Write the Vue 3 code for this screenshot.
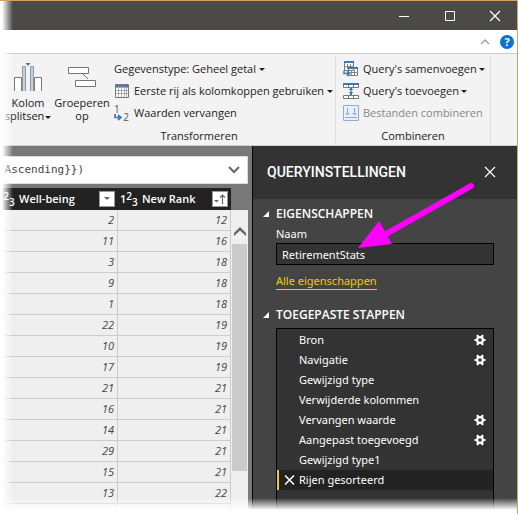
<script setup>
import { ref } from 'vue'

const rows = [
  [2, 12], [11, 16], [3, 18], [9, 18], [1, 18], [22, 19], [10, 19],
  [17, 19], [21, 21], [16, 21], [14, 21], [29, 21], [15, 21], [13, 22], ['', ''],
]
const steps = [
  { label: 'Bron', gear: true },
  { label: 'Navigatie', gear: true },
  { label: 'Gewijzigd type' },
  { label: 'Verwijderde kolommen' },
  { label: 'Vervangen waarde', gear: true },
  { label: 'Aangepast toegevoegd', gear: true },
  { label: 'Gewijzigd type1' },
  { label: 'Rijen gesorteerd' },
]
const selected = ref(7)
const queryName = ref('RetirementStats')
</script>

<template>
  <div class="window">
    <header class="titlebar">
      <button class="win-btn" aria-label="Minimaliseren">
        <svg width="12" height="12" viewBox="0 0 12 12"><path d="M1 6.5h10" stroke="#fff" /></svg>
      </button>
      <button class="win-btn" aria-label="Maximaliseren">
        <svg width="12" height="12" viewBox="0 0 12 12"><path d="M1.5 1.5h9v9h-9z" fill="none" stroke="#fff" /></svg>
      </button>
      <button class="win-btn" aria-label="Venster sluiten">
        <svg width="12" height="12" viewBox="0 0 12 12"><path d="M1 1l10 10M11 1L1 11" stroke="#fff" stroke-width="1.3" /></svg>
      </button>
    </header>

    <div class="tabs">
      <button class="plain" aria-label="Lint samenvouwen">
        <svg width="10" height="8" viewBox="0 0 10 8"><path d="M1 6l4-4 4 4" fill="none" stroke="#999" stroke-width="1.3" /></svg>
      </button>
      <button class="plain help" aria-label="Help">?</button>
    </div>

    <nav class="ribbon">
      <section class="group transform">
        <div class="group-body">
          <button class="big split">
            <svg width="30" height="30" viewBox="0 0 30 30">
              <path d="M1.500 29V15.500h7V29M21.500 29V15.500h7V29" fill="#fff" stroke="#777" />
              <path d="M9.500 29V4.500h3V29M17.500 29V4.500h3V29" fill="#bcd2ea" stroke="#999" />
              <path d="M12.500 1h5L15 4z" fill="#3a78b8" />
            </svg>
            <span>Kolom<br />splitsen<i class="caret"></i></span>
          </button>
          <button class="big">
            <svg width="30" height="30" viewBox="0 0 30 30">
              <path d="M15 11l6 6" stroke="#777" />
              <path d="M1.500 5.500h20v6h-20zM8.500 18.500h20v6h-20z" fill="#fff" stroke="#777" />
            </svg>
            <span>Groeperen<br />op</span>
          </button>
          <div class="stack">
            <button class="small">Gegevenstype: Geheel getal<i class="caret"></i></button>
            <button class="small">
              <svg class="ic-table" width="14" height="14" viewBox="0 0 14 14">
                <path d="M.5.5h13v13H.5z" fill="#fff" stroke="#777" />
                <path d="M1 1h12v2H1z" fill="#3a78b8" />
                <path d="M1 3.500h12M1 6.500h12M1 9.500h12M3.500 1v12M6.500 1v12M9.500 1v12M11.500 3v10" stroke="#999" stroke-width=".8" />
              </svg>
              Eerste rij als kolomkoppen gebruiken<i class="caret"></i>
            </button>
            <button class="small">
              <span class="ic-replace" aria-hidden="true">
                <b>1</b>
                <svg width="8" height="7" viewBox="0 0 8 7"><path d="M1 0v3.500h5M4 1l3 2.500L4 6" fill="none" stroke="#3a78b8" stroke-width="1.700" /></svg>
                <b>2</b>
              </span>
              Waarden vervangen
            </button>
          </div>
        </div>
        <h2>Transformeren</h2>
      </section>

      <section class="group combine">
        <div class="group-body">
          <div class="stack">
            <button class="small">
              <svg width="16" height="16" viewBox="0 0 16 16">
                <path d="M1.500 1.500h9v8h-9zM5.500 7.500h9v7h-9z" fill="#fff" stroke="#777" />
                <path d="M4.500 3v5M7.500 3v4M1 5.500h10M5 11.500h10M8.500 9v6M11.500 9v6" stroke="#888" />
                <path d="M1 0h10v2H1zM5 6h10v2H5z" fill="#3a78b8" />
                <path d="M0 10h5v6H0z" fill="#f3f3f3" />
                <path d="M1 9.500v3h5M4 10.500l2.500 2L4 15" fill="none" stroke="#3a78b8" stroke-width="1.500" />
              </svg>
              Query's samenvoegen<i class="caret"></i>
            </button>
            <button class="small">
              <svg width="16" height="16" viewBox="0 0 16 16">
                <path d="M.5 1.500h15v3H.5zM.5 12.500h15v3H.5zM5.500 2v2M10.500 2v2M5.500 13v2M10.500 13v2" fill="#fff" stroke="#777" />
                <path d="M0 0h16v2H0z" fill="#3a78b8" />
                <path d="M7 5h2v1h1.500L8 8 5.500 6H7zM8 8l2.500 2H9v2H7v-2H5.500z" fill="#3a78b8" />
              </svg>
              Query's toevoegen<i class="caret"></i>
            </button>
            <button class="small" disabled>
              <svg width="16" height="16" viewBox="0 0 16 16">
                <path d="M.5.5h15v15H.5z" fill="#e9f0f8" stroke="#8fadd0" />
                <path d="M4.500 3v7M2.500 8l2 2 2-2M11.500 3v7M9.500 8l2 2 2-2M2 12.500h12" fill="none" stroke="#8fa6c4" />
              </svg>
              Bestanden combineren
            </button>
          </div>
        </div>
        <h2>Combineren</h2>
      </section>
    </nav>

    <main class="work">
      <section class="data">
        <div class="formula">
          <code>.Ascending}})</code>
          <button class="plain" aria-label="Formulebalk uitvouwen">
            <svg width="12" height="8" viewBox="0 0 12 8"><path d="M1 1l5 5 5-5" fill="none" stroke="#666" stroke-width="2" /></svg>
          </button>
        </div>
        <div class="grid-wrap">
          <table>
            <thead>
              <tr>
                <th v-for="(name, i) in ['Well-being', 'New Rank']" :key="name">
                  <div class="th">
                    <span class="type">1<sup>2</sup><sub>3</sub></span>
                    <span class="name">{{ name }}</span>
                    <button class="filter" :aria-label="'Filter ' + name">
                      <svg v-if="i === 0" width="14" height="14" viewBox="0 0 14 14"><path d="M4 5h6L7 8z" fill="#666" /></svg>
                      <svg v-else width="14" height="14" viewBox="0 0 14 14">
                        <path d="M1 8h5L3.500 10.500z" fill="#666" />
                        <path d="M9.500 12V3M7 5.500L9.500 3 12 5.500" fill="none" stroke="#666" stroke-width="1.200" />
                      </svg>
                    </button>
                  </div>
                </th>
              </tr>
            </thead>
            <tbody>
              <tr v-for="(r, i) in rows" :key="i">
                <td>{{ r[0] }}</td>
                <td>{{ r[1] }}</td>
              </tr>
            </tbody>
          </table>
          <div class="scroll">
            <button class="plain scroll-up" aria-label="Omhoog schuiven">
              <svg width="12" height="9" viewBox="0 0 12 9"><path d="M0 8V6l6-6 6 6v3L6 3.500 0 9z" fill="#666" /></svg>
            </button>
            <div class="thumb"></div>
          </div>
        </div>
      </section>

      <aside class="settings">
        <div class="settings-head">
          <h1>QUERYINSTELLINGEN</h1>
          <button class="plain" aria-label="Paneel sluiten">
            <svg width="12" height="12" viewBox="0 0 12 12"><path d="M1 1l10 10M11 1L1 11" stroke="#fff" stroke-width="1.200" /></svg>
          </button>
        </div>
        <div class="settings-body">
          <h3><svg width="6" height="6" viewBox="0 0 6 6"><path d="M6 0v6H0z" fill="#fff" /></svg>EIGENSCHAPPEN</h3>
          <div class="props">
            <label for="qname">Naam</label>
            <input id="qname" v-model="queryName" type="text" />
            <a href="#">Alle eigenschappen</a>
          </div>
          <h3><svg width="6" height="6" viewBox="0 0 6 6"><path d="M6 0v6H0z" fill="#fff" /></svg>TOEGEPASTE STAPPEN</h3>
          <ul class="steps">
            <li v-for="(s, i) in steps" :key="s.label" :class="{ active: i === selected }" @click="selected = i">
              <button v-if="i === selected" class="plain remove" aria-label="Stap verwijderen">
                <svg width="11" height="10" viewBox="0 0 11 10"><path d="M1 .5L10 9.500M10 .5L1 9.500" stroke="#fff" stroke-width="1.500" /></svg>
              </button>
              <span>{{ s.label }}</span>
              <button v-if="s.gear" class="plain gear" :aria-label="'Instellingen ' + s.label">
                <svg width="12" height="12" viewBox="0 0 12 12">
                  <circle cx="6" cy="6" r="2.900" fill="none" stroke="#fff" stroke-width="2.200" />
                  <path d="M.5 6h2M9.500 6h2M3.200 1l1 2M8.800 1l-1 2M3.200 11l1-2M8.800 11l-1-2" stroke="#fff" stroke-width="2.200" />
                </svg>
              </button>
            </li>
          </ul>
        </div>
        <svg class="pointer" width="142" height="84" viewBox="0 0 142 84" aria-hidden="true">
          <path d="M115 8L30 56" stroke="#f0f" stroke-width="6" stroke-linecap="round" />
          <path d="M2 70L23 43 36 66z" fill="#f0f" />
        </svg>
      </aside>
    </main>
    <div class="fade-left"></div>
    <div class="fade-bottom"></div>
  </div>
</template>

<style>
body { margin: 0; background: #fff; }
</style>

<style scoped>
* { box-sizing: border-box; }
.window {
  position: relative;
  display: flex;
  flex-direction: column;
  height: 100vh;
  overflow: hidden;
  border-top: 1px solid #d9a05c;
  border-right: 1px solid #d9a05c;
  font: 12px/16px "Open Sans", "Noto Sans", sans-serif;
  color: #222;
}
button { font: inherit; color: inherit; background: none; border: 0; padding: 0; margin: 0; }
h1, h2, h3, ul { margin: 0; padding: 0; list-style: none; }
.plain { display: flex; align-items: center; justify-content: center; }
svg { display: block; flex: none; }

.titlebar { flex: none; display: flex; justify-content: flex-end; height: 29px; background: #4b4a48; }
.win-btn { width: 46px; display: flex; align-items: center; justify-content: center; }
.win-btn:last-child { width: 44px; }

.tabs {
  flex: none; display: flex; justify-content: flex-end; align-items: center; gap: 10px;
  height: 24px; padding-right: 3px; background: #fff; border-bottom: 1px solid #ccc;
}
.help {
  width: 14px; height: 14px; border-radius: 50%; background: #0a73d0; color: #fff;
  font-weight: 700; font-size: 11px;
}

.ribbon { flex: none; display: flex; padding: 2px 0; height: 92px; background: #f3f3f3; border-bottom: 1px solid #ccc; }
.group { display: flex; flex-direction: column; border-right: 1px solid #dcdcdc; font-size: 11px; }
.transform { width: 336px; }
.combine { width: 155px; padding-left: 7px; }
.group-body { display: flex; align-items: flex-start; padding-top: 2px; }
.group h2 { font-size: 11px; font-weight: 400; text-align: center; padding: 4px 0; }
.transform h2 { padding-left: 63px; }
.combine h2 { padding-right: 7px; }
.big {
  display: flex; flex-direction: column; align-items: center; width: 52px;
  padding-top: 4px; gap: 4px; line-height: 13px; white-space: nowrap;
}
.split { width: 56px; }
.stack { display: flex; flex-direction: column; padding-left: 6px; }
.combine .stack { padding-left: 0; }
.small { display: flex; align-items: center; gap: 5px; height: 22px; white-space: nowrap; }
.combine .small { gap: 4px; }
.small:disabled { color: #888; }
.caret {
  display: inline-block; vertical-align: middle; margin-left: 1px;
  border: 3px solid transparent; border-top-color: #222; border-bottom: 0;
}
.small .caret { margin-left: -2px; }
.ic-table { margin-left: 1px; }
.ic-replace { display: grid; grid-template-columns: 9px 6px; align-items: end; font-size: 10px; line-height: 8px; color: #555; }
.ic-replace b { font-weight: 400; }
.ic-replace b:first-child { grid-column: 1 / 3; text-align: left; }

.work { flex: 1; min-height: 0; display: grid; grid-template-columns: minmax(0, 1fr) 265px; }
.data { background: #787878; padding-top: 10px; overflow: hidden; }
.formula {
  display: flex; justify-content: space-between; align-items: center; height: 28px;
  margin: 0 4px 0 -2px; padding-right: 7px; background: #fff; border: 1px solid #ddd; border-left: 0;
}
.formula code { font: 11px/16px "DejaVu Sans Mono", monospace; color: #444; }
.grid-wrap { display: flex; margin-left: -5px; padding: 4px 4px 0 0; }
table { flex: 1; border-collapse: separate; border-spacing: 0; table-layout: fixed; }
th { padding: 0; background: #222; color: #fff; height: 22px; }
th:last-child { width: 113px; }
.th { display: flex; align-items: center; height: 22px; padding: 0 3px 0 2px; }
.type { width: 22px; font-size: 11px; line-height: 12px; font-weight: 600; text-align: left; white-space: nowrap; }
.type sup, .type sub { font-size: 10px; line-height: 0; }
.type sup { vertical-align: 3px; }
.type sub { vertical-align: -3px; }
.name { flex: 1; text-align: left; font-size: 11px; white-space: nowrap; font-weight: 600; }
.filter { width: 16px; height: 16px; background: #fff; border: 1px solid #999; display: flex; }
td {
  height: 21px; padding: 0 3px; background: #efefef; text-align: right; color: #444; font-size: 11px;
  font-style: italic; line-height: 16px; border-right: 1px solid #ccc; border-bottom: 1px solid #ccc;
}
.scroll { display: flex; flex-direction: column; width: 17px; margin-top: 22px; padding: 0 1px; background: #efefef; }
.scroll-up { height: 34px; padding-top: 8px; }
.thumb { height: 227px; background: #cbcbcb; }

.settings { position: relative; display: flex; flex-direction: column; min-height: 0; background: #444; border-left: 1px solid #000; color: #fff; }
.settings-head {
  display: flex; align-items: center; justify-content: space-between; height: 53px; flex: none;
  background: #333; padding: 0 21px 2px 14px;
}
h1 { font: 500 14px/20px Roboto, sans-serif; }
.settings-body { flex: 1; min-height: 0; display: flex; flex-direction: column; padding: 6px 23px 0 10px; }
h3 { display: flex; align-items: center; gap: 7px; font-size: 12px; line-height: 18px; font-weight: 600; }
.props, .steps { font-family: "Noto Sans", sans-serif; font-size: 11px; }
.props { display: flex; flex-direction: column; align-items: flex-start; padding: 2px 0 16px 13px; }
.props label { line-height: 18px; }
.props input {
  width: 100%; height: 22px; padding: 0 5px; background: #333; border: 1px solid #000;
  color: #fff; font: inherit; border-radius: 0;
}
.props a { margin-top: 8px; line-height: 16px; color: #f2c811; text-decoration: none; border-bottom: 1px solid #f2c811; }
.steps { flex: 1; margin: 4px 0 0 13px; background: #333; border: 1px solid #000; border-bottom: 0; padding-top: 1px; }
.steps li { display: flex; align-items: center; height: 20px; padding: 0 7px 0 22px; }
.steps li.active { background: #222; border-left: 2px solid #f2c811; padding-left: 5px; }
.remove { width: 15px; padding-right: 4px; }
.gear { margin-left: auto; }
.pointer { position: absolute; right: 19px; top: 32px; }

.fade-left {
  position: absolute; left: 0; top: 0; bottom: 0; width: 13px; pointer-events: none;
  background: linear-gradient(to right, #fff 15%, rgba(255, 255, 255, 0));
}
.fade-bottom {
  position: absolute; left: 0; right: -1px; bottom: 0; height: 16px; pointer-events: none;
  background: linear-gradient(to top, #fff 25%, rgba(255, 255, 255, 0));
}
</style>
